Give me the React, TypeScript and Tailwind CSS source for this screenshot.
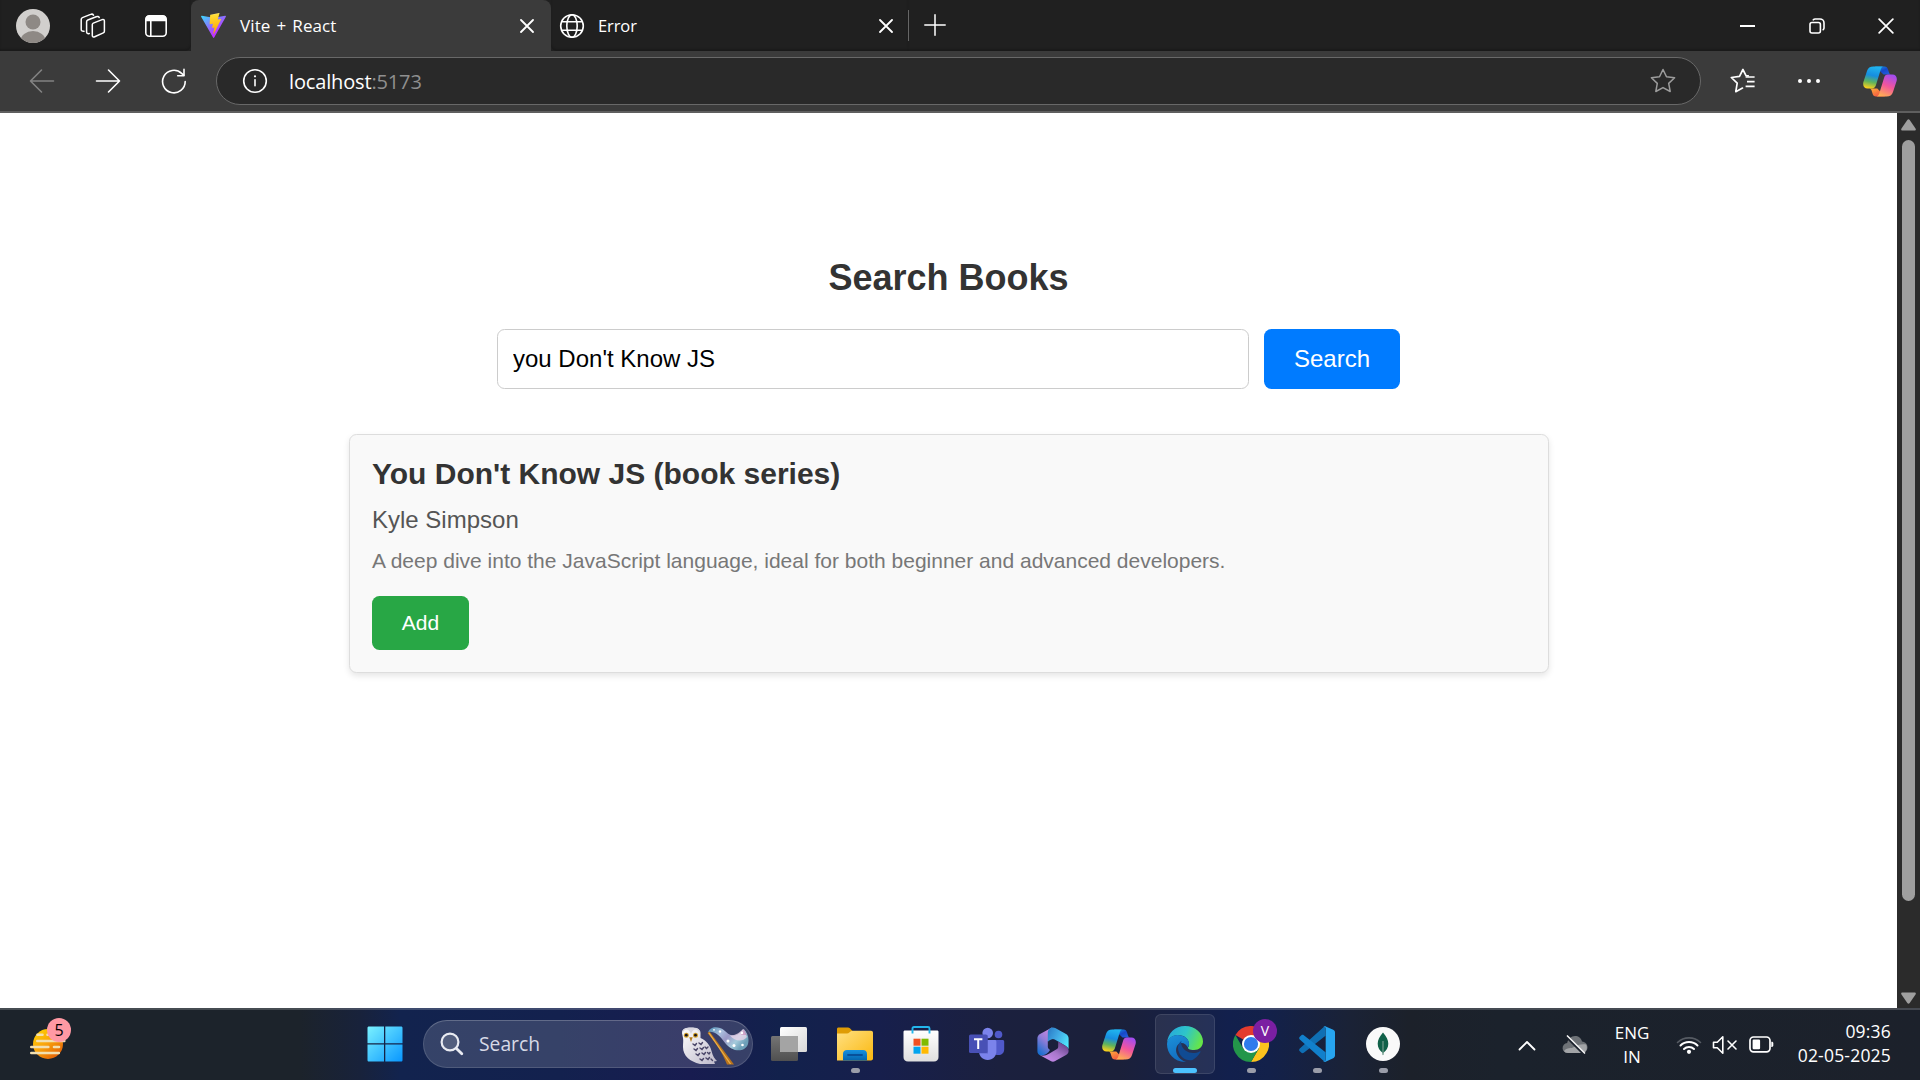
import React, { useState } from "react";

type IconProps = { className?: string };

const uiFont = "font-['Open_Sans','Noto_Sans',sans-serif]";

/* ---------- Browser chrome icons ---------- */

const Avatar = () => (
  <svg width="34" height="34" viewBox="0 0 34 34">
    <defs>
      <clipPath id="avatarClip"><circle cx="17" cy="17" r="17" /></clipPath>
    </defs>
    <circle cx="17" cy="17" r="17" fill="#d1cfcd" />
    <g clipPath="url(#avatarClip)" fill="#8e8985">
      <circle cx="17" cy="13" r="7.5" />
      <ellipse cx="17" cy="32" rx="12.5" ry="10" />
    </g>
  </svg>
);

const Workspaces = () => (
  <svg width="26" height="26" viewBox="0 0 26 26" fill="none" stroke="#fff" strokeWidth="1.5" strokeLinejoin="round" strokeLinecap="round">
    <path d="M12.3 11.6c0-.7.4-1.2 1-1.5l8.800-3.500c1.300-.5 2.300.1 2.300 1.400v10.200c0 .8-.4 1.400-1.100 1.700l-8.600 3.900c-1.300.6-2.400 0-2.400-1.300z" />
    <path d="M9.300 20.500c-1.600.5-2.700-.1-2.700-1.500V8.800c0-.8.4-1.500 1.200-1.800l8.400-3.300c1.300-.5 2.600-.2 3 .9" />
    <path d="M4 18.200c-1.700.3-2.800-.4-2.800-1.700V6.400c0-.8.5-1.500 1.200-1.800l8.200-3.200c1.200-.5 2.300-.2 2.900.7" />
  </svg>
);

const TabActions = () => (
  <svg width="24" height="24" viewBox="0 0 24 24" fill="none">
    <rect x="1.800" y="1.800" width="20.400" height="20.400" rx="3.500" stroke="#fff" strokeWidth="1.600" />
    <path d="M1.500 7.300V5A3.500 3.500 0 0 1 5 1.500h14A3.500 3.500 0 0 1 22.500 5v2.300z" fill="#fff" />
    <path d="M6.800 7v15" stroke="#fff" strokeWidth="1.600" />
  </svg>
);

const ViteLogo = () => (
  <svg width="25" height="25" viewBox="0 0 256 257">
    <defs>
      <linearGradient id="viteA" x1="-.8%" x2="57.600%" y1="7.600%" y2="78.400%">
        <stop offset="0%" stopColor="#41D1FF" /><stop offset="100%" stopColor="#BD34FE" />
      </linearGradient>
      <linearGradient id="viteB" x1="43.400%" x2="50.300%" y1="2.200%" y2="89%">
        <stop offset="0%" stopColor="#FFEA83" /><stop offset="8.300%" stopColor="#FFDD35" /><stop offset="100%" stopColor="#FFA800" />
      </linearGradient>
    </defs>
    <path fill="url(#viteA)" d="M255.153 37.938L134.897 252.976c-2.483 4.440-8.862 4.466-11.382.048L.875 37.958c-2.746-4.814 1.371-10.646 6.827-9.670l120.385 21.517a6.537 6.537 0 0 0 2.322-.004l117.867-21.483c5.438-.991 9.574 4.796 6.877 9.620Z" />
    <path fill="url(#viteB)" d="M185.432.063L96.440 17.501a3.268 3.268 0 0 0-2.634 3.014l-5.474 92.456a3.268 3.268 0 0 0 3.997 3.378l24.777-5.718c2.318-.535 4.413 1.507 3.936 3.838l-7.361 36.047c-.495 2.426 1.782 4.500 4.151 3.780l15.304-4.649c2.372-.720 4.652 1.360 4.150 3.788l-11.698 56.621c-.732 3.542 3.979 5.473 5.943 2.437l1.313-2.028l72.516-144.720c1.215-2.423-.880-5.186-3.540-4.672l-25.505 4.922c-2.396.462-4.435-1.770-3.759-4.114l16.646-57.705c.677-2.350-1.370-4.583-3.769-4.113Z" />
  </svg>
);

const Cross = ({ size, width = 1.8 }: { size: number; width?: number }) => (
  <svg width={size} height={size} viewBox="0 0 14 14" stroke="#fff" strokeWidth={width} strokeLinecap="round">
    <path d="M1 1l12 12M13 1L1 13" />
  </svg>
);

const Globe = () => (
  <svg width="26" height="26" viewBox="0 0 26 26" fill="none" stroke="#fff" strokeWidth="1.600">
    <circle cx="13" cy="13" r="11.300" />
    <ellipse cx="13" cy="13" rx="5.200" ry="11.300" />
    <path d="M2.600 8.800h20.800M2.600 17.300h20.800" />
  </svg>
);

const Plus = () => (
  <svg width="22" height="22" viewBox="0 0 22 22" stroke="#fff" strokeWidth="1.500" strokeLinecap="round">
    <path d="M11 .8v20.400M.8 11h20.400" />
  </svg>
);

const Restore = () => (
  <svg width="16" height="16" viewBox="0 0 16 16" fill="none" stroke="#fff" strokeWidth="1.600" strokeLinecap="round">
    <rect x="1" y="4.500" width="10.400" height="10.500" rx="2" />
    <path d="M4.300 1.800C4.800 1.200 5.400 1 6.200 1h4.800a4 4 0 0 1 4 4v5c0 .7-.3 1.300-.8 1.700" />
  </svg>
);

const Arrow = ({ className }: IconProps) => (
  <svg className={className} width="26" height="26" viewBox="0 0 26 26" fill="none" stroke="currentColor" strokeWidth="1.600" strokeLinecap="round" strokeLinejoin="round">
    <path d="M1.500 13h23M13.500 2l11 11-11 11" />
  </svg>
);

const Reload = () => (
  <svg width="26" height="26" viewBox="0 0 26 26" fill="none" stroke="#fff" strokeWidth="1.600" strokeLinecap="round" strokeLinejoin="round">
    <path d="M24.200 13.500A11.300 11.300 0 1 1 20.600 5.300L22.700 7.200" />
    <path d="M23 1.400v6.300h-6.300" />
  </svg>
);

const Info = () => (
  <svg width="26" height="26" viewBox="0 0 26 26" fill="none" stroke="#fff" strokeWidth="1.600" strokeLinecap="round">
    <circle cx="13" cy="13" r="11.300" />
    <path d="M13 11.800v6" />
    <circle cx="13" cy="8.300" r="1.100" fill="#fff" stroke="none" />
  </svg>
);

const Star = () => (
  <svg width="26" height="26" viewBox="0 0 26 26" fill="none" stroke="#9c9c9c" strokeWidth="1.500" strokeLinejoin="round">
    <path d="M13 1.500l3.500 7.300 8.100 1-5.900 5.600 1.500 8.100-7.200-3.900-7.200 3.900 1.500-8.100L1.400 9.800l8.100-1z" />
  </svg>
);

const Favorites = () => (
  <svg width="26" height="26" viewBox="0 0 26 26" fill="none" stroke="#fff" strokeWidth="1.700" strokeLinejoin="round" strokeLinecap="round">
    <path d="M18.200 7.900l-2.200-.3L12.900 1.500 9.500 8.400l-8.200 1.100 5.900 5.600-1.400 8.600 6.700-3.600" />
    <path d="M15.600 9h9M17 13.600h7.600M15.600 18.300h9" strokeLinecap="butt" />
  </svg>
);

const Copilot = ({ id }: { id: string }) => (
  <svg width="34" height="31" viewBox="0 0 34 31">
    <defs>
      <linearGradient id={id + "a"} x1="0.5" x2="0.3" y1="0" y2="1">
        <stop offset="0" stopColor="#20b4ee" /><stop offset=".4" stopColor="#168de0" /><stop offset=".7" stopColor="#60b35b" /><stop offset="1" stopColor="#ffd11a" />
      </linearGradient>
      <linearGradient id={id + "b"} x1="0.7" x2="0.3" y1="0" y2="1">
        <stop offset="0" stopColor="#a34cf0" /><stop offset=".5" stopColor="#f2559c" /><stop offset="1" stopColor="#ffae52" />
      </linearGradient>
      <linearGradient id={id + "c"} x1="0" x2="1" y1="0" y2="1">
        <stop offset="0" stopColor="#18a2ec" /><stop offset=".5" stopColor="#1748c8" /><stop offset="1" stopColor="#2765e4" />
      </linearGradient>
      <linearGradient id={id + "d"} x1="0" x2="1" y1="0" y2="1">
        <stop offset="0" stopColor="#ffb238" /><stop offset="1" stopColor="#ee3d45" />
      </linearGradient>
    </defs>
    <path d="M12 .5h9.500c2 0 3 1.300 3.500 3l1 3c.4 1.400 1.300 2 2.700 2h-8.200z" fill={`url(#${id}c)`} />
    <path d="M22 30.500h-9c-2 0-3-1.300-3.500-3l-1-3.200c-.4-1.300-1.300-1.800-2.700-1.800h8.500z" fill={`url(#${id}d)`} />
    <path d="M10.500.5h10c-1.700 0-2.400 1.700-2.900 3.400l-4.700 15.400c-.6 2-1.800 3.200-3.800 3.200H4.600C1.300 22.500-.5 19.900.4 16L4 5C5 1.800 7 .5 10.500.5z" fill={`url(#${id}a)`} />
    <path d="M23.500 30.500h-10c1.700 0 2.400-1.700 2.900-3.400l4.700-15.400c.6-2 1.800-3.200 3.800-3.200h4.500c3.300 0 5.100 2.600 4.200 6.500L30 26c-1 3.200-3 4.500-6.500 4.500z" fill={`url(#${id}b)`} />
  </svg>
);

/* ---------- Taskbar icons ---------- */

const Weather = () => (
  <svg width="38" height="32" viewBox="0 0 38 32">
    <defs>
      <linearGradient id="sun" x1="0" x2=".8" y1="0" y2="1">
        <stop offset="0" stopColor="#ffd800" /><stop offset=".5" stopColor="#f9a50c" /><stop offset="1" stopColor="#e25b05" />
      </linearGradient>
    </defs>
    <circle cx="19" cy="16" r="15" fill="url(#sun)" />
    <g stroke="#f2dfaf" strokeWidth="2.600" strokeLinecap="round">
      <path d="M8.500 6.800h5M8.300 13h27M2.300 19h17M25 19h5M2.300 25h27.500M18.500 6.800h3" />
    </g>
  </svg>
);

const WindowsLogo = () => (
  <svg width="36" height="36" viewBox="0 0 36 36">
    <defs>
      <linearGradient id="win" x1="0" y1="0" x2="36" y2="36" gradientUnits="userSpaceOnUse">
        <stop offset="0" stopColor="#7cf3ff" /><stop offset="1" stopColor="#0795ff" />
      </linearGradient>
    </defs>
    <g fill="url(#win)">
      <path d="M2 .5h15v16.700H.5V2C.5 1 1 .5 2 .5zM18.300.5H34c1 0 1.500.5 1.500 1.500v15.200H18.300zM.5 18.600H17v16.900H2c-1 0-1.500-.5-1.500-1.500zM18.300 18.600h17.200V34c0 1-.5 1.500-1.500 1.500H18.300z" />
    </g>
  </svg>
);

const Magnifier = () => (
  <svg width="24" height="24" viewBox="0 0 24 24" fill="none" stroke="#e9ebf2" strokeWidth="2.200" strokeLinecap="round">
    <circle cx="10" cy="10" r="8.400" fill="#ffffff26" />
    <path d="M16.200 16.200l5.600 5.600" strokeWidth="2.800" />
  </svg>
);

const OwlArt = () => (
  <svg width="68" height="38" viewBox="0 0 68 38">
    <defs>
      <linearGradient id="hat" x1="0" x2="1" y1="0" y2=".5">
        <stop offset="0" stopColor="#4a8db0" /><stop offset=".35" stopColor="#a9bedd" /><stop offset=".55" stopColor="#9a98c6" /><stop offset=".8" stopColor="#a5cbdc" /><stop offset="1" stopColor="#6d9fb8" />
      </linearGradient>
      <linearGradient id="owl" x1="0" x2="1" y1="0" y2="1">
        <stop offset="0" stopColor="#fff" /><stop offset="1" stopColor="#bdb9ca" />
      </linearGradient>
    </defs>
    <path d="M1 6C1 2 5 .8 10 .8S19.500 2 19.500 6v5c6 2.500 9.500 7 11 13 1.300 5 3.200 8 5.500 10l-3 .5 1 2.500H19C9 34.500 2 29 2 20c0-4 .5-6 0-9z" fill="url(#owl)" />
    <path d="M2 5c2-3.500 6-3.500 8 2 2-5.500 6-5.500 8-2l1 1C19 1.500 16 .5 10 .5S1 2 1 6z" fill="#d8d6e0" />
    <circle cx="5.300" cy="8.200" r="2.500" fill="#d6a32c" /><circle cx="14.500" cy="8.200" r="2.500" fill="#d6a32c" />
    <circle cx="5.300" cy="8.200" r="1.400" fill="#1a1720" /><circle cx="14.500" cy="8.200" r="1.400" fill="#1a1720" />
    <path d="M8.300 10.200h3.400L10 15z" fill="#b07a1c" />
    <g stroke="#4a4668" strokeWidth="1.400" strokeLinecap="round" fill="none">
      <path d="M12 17l2 1.500 1.500-2M18 16l2 1.500 1.500-2M13 22l2 1.500 1.500-2M19 21l2 1.500 1.500-2M24 20l1.500 1.500 1.500-1.500M15 27l2 1.500 1.500-2M21 26l2 1.500 1.500-2M26.500 25.500l1.500 1.500 1-1.500M19 32l2 1.500 1.500-2M25 31l2 1.500 1.500-2M30 32l1.500 1.500" />
    </g>
    <path d="M27 5.500C29 0 34-.5 39 1c6 2 8 8 14 7.500 5-.5 7-4 9.500-6.500 4 3.500 6 9 4.500 15-2 6.500-10 8-16.500 4.500C44 18 41 10 35 6.500 32 4.800 29 4 27 5.500z" fill="url(#hat)" />
    <path d="M49 8.500c6 0 10-3.500 13-6.500l4 8c-4 5-12 5-17-1.500z" fill="#ecd5ea" opacity=".75" />
    <path d="M60 8l3-6 3 6z" fill="#c77bb0" opacity=".55" />
    <path d="M26.500 6l2-1.500L53 37.500h-7C41 24.500 33.500 14.500 26.500 6z" fill="#b9731c" />
    <path d="M28 6l21.500 31" stroke="#eab04a" strokeWidth="1.300" />
    <g fill="#fff"><circle cx="39" cy="4.500" r="1.200" /><circle cx="47" cy="14" r="1.500" /><circle cx="61" cy="6" r="1.200" /><circle cx="53" cy="18.500" r="1.500" /><circle cx="61.500" cy="18" r="1.300" /><circle cx="33" cy="2.800" r=".9" /></g>
  </svg>
);

const TaskView = () => (
  <svg width="36" height="34" viewBox="0 0 36 34">
    <defs>
      <linearGradient id="tv1" x1="0" x2="0" y1="0" y2="1"><stop offset="0" stopColor="#747474" /><stop offset="1" stopColor="#505050" /></linearGradient>
      <linearGradient id="tv2" x1="0" x2="1" y1="0" y2="1"><stop offset="0" stopColor="#fff" /><stop offset="1" stopColor="#d8d8d8" /></linearGradient>
    </defs>
    <rect x="0" y="9" width="27" height="25" rx="1.500" fill="url(#tv1)" />
    <rect x="9" y="0" width="27" height="25" rx="1.500" fill="url(#tv2)" />
    <path d="M9 9h18v16H10.500C9.500 25 9 24.500 9 23.500z" fill="#a4a4a4" />
  </svg>
);

const Explorer = () => (
  <svg width="36" height="34" viewBox="0 0 36 34">
    <defs>
      <linearGradient id="fe1" x1="0" x2="1" y1="0" y2="1"><stop offset="0" stopColor="#ffe082" /><stop offset="1" stopColor="#fbb80f" /></linearGradient>
      <linearGradient id="fe2" x1="0" x2="0" y1="0" y2="1"><stop offset="0" stopColor="#1590e0" /><stop offset="1" stopColor="#0564ad" /></linearGradient>
    </defs>
    <path d="M0 2C0 1 .7.500 1.500.500H11c.8 0 1.300.2 1.900.8L16 4.500v5H0z" fill="#df9c05" />
    <path d="M0 6.500h10c1 0 1.700-.3 2.300-.9l1.200-1c.6-.5 1.200-.8 2-.8H34c1.200 0 2 .8 2 2V31.500c0 1.200-.8 2-2 2H0z" fill="url(#fe1)" />
    <path d="M6 33.500V27c0-2.500 1.500-4 4-4h16c2.500 0 4 1.500 4 4v6.500z" fill="url(#fe2)" />
    <path d="M11 28h14" stroke="#07509a" strokeWidth="1.800" strokeLinecap="round" />
  </svg>
);

const Store = () => (
  <svg width="36" height="36" viewBox="0 0 36 36">
    <defs><linearGradient id="st" x1="0" x2="0" y1="0" y2="1"><stop offset="0" stopColor="#fff" /><stop offset="1" stopColor="#dedede" /></linearGradient></defs>
    <path d="M.5 6c0-1 .5-1.500 1.500-1.500h32c1 0 1.500.5 1.500 1.500v25c0 2.800-1.700 4.500-4.500 4.500H5C2.200 35.500.5 33.800.5 31z" fill="url(#st)" />
    <path d="M9.500 7.500V2.500c0-1 .5-1.500 1.500-1.500h14c1 0 1.500.5 1.500 1.500v5" fill="none" stroke="#23b6ec" strokeWidth="1.900" />
    <path d="M10.500 12.700h7v7h-7z" fill="#f15022" /><path d="M18.500 12.700h7v7h-7z" fill="#80bb01" />
    <path d="M10.500 20.700h7v7h-7z" fill="#02a4ef" /><path d="M18.500 20.700h7v7h-7z" fill="#ffb902" />
  </svg>
);

const Teams = () => (
  <svg width="36" height="34" viewBox="0 0 36 34">
    <circle cx="29.500" cy="7.500" r="3.800" fill="#5059c9" />
    <path d="M24 13h9.500c1 0 1.700.7 1.700 1.700V22c0 4-2.500 6-6 6s-5.200-2-5.200-6z" fill="#5059c9" />
    <circle cx="18.700" cy="6" r="5.300" fill="#7b83eb" />
    <path d="M10.500 13h15.200c1 0 1.700.7 1.700 1.700V24c0 5.500-3.700 9-8.700 9S10 29.500 10 24z" fill="#7b83eb" />
    <path d="M10 8.500h9v18h-8.600c-.3-1-.4-2-.4-3z" fill="#4a50ad" opacity=".5" />
    <rect x="0" y="7.500" width="18.500" height="18.500" rx="1.600" fill="#4850b5" />
    <path d="M5 12.300h8.400M9.200 12.300v9.700" stroke="#fff" strokeWidth="2" />
  </svg>
);

const Office = () => (
  <svg width="32" height="35" viewBox="0 0 32 35">
    <defs>
      <linearGradient id="of1" x1=".8" x2=".3" y1="0" y2="1"><stop offset="0" stopColor="#d68be0" /><stop offset=".5" stopColor="#8f7cd8" /><stop offset="1" stopColor="#1b6fd0" /></linearGradient>
      <linearGradient id="of2" x1="0" x2="1" y1=".2" y2=".7"><stop offset="0" stopColor="#2b7fc9" /><stop offset=".5" stopColor="#43aee6" /><stop offset="1" stopColor="#4fe6fb" /></linearGradient>
      <linearGradient id="of3" x1=".2" x2=".9" y1="1" y2=".2"><stop offset="0" stopColor="#c98bec" /><stop offset=".5" stopColor="#a978cc" /><stop offset="1" stopColor="#6b4690" /></linearGradient>
    </defs>
    <path d="M15 .5L3 7C1.300 8 .4 9.500.4 11.500V24c0 2 .9 3.400 2.600 4.300 3.500 1 8-1.800 10-5.300l-1.200-1c-.7-.6-1-1.300-1-2.200V15c0-1 .3-1.700 1.200-2.200l4-2.500z" fill="url(#of1)" />
    <path d="M10.800 15V5.500C10.800 2.500 13.500.2 16 .4c.8 0 1.500.2 2.200.6L29 7c1.700 1 2.600 2.500 2.600 4.500V22c-.7-1.500-1.800-2.500-3.200-3.300L21.200 14.500l-3.500-2.100c-1.200-.7-2.300-.7-3.500 0l-2.400 1.400z" fill="url(#of2)" />
    <path d="M3 28.300c3 1 6.300 0 9-1.600l7.500-4.500c1.200-.7 1.700-1.500 1.700-2.800v-4.900l7.200 4.200c2 1.200 3.200 2.800 3.200 5 0 2-.9 3.400-2.600 4.400l-10.800 6c-1.500.8-3 .8-4.500 0z" fill="url(#of3)" />
  </svg>
);

const Edge = () => (
  <svg width="36" height="36" viewBox="0 0 36 36">
    <defs>
      <linearGradient id="ed1" x1="0" x2="1" y1=".2" y2=".5"><stop offset="0" stopColor="#26a6dd" /><stop offset=".5" stopColor="#2ec5c9" /><stop offset="1" stopColor="#66e648" /></linearGradient>
      <linearGradient id="ed2" x1=".3" x2=".7" y1="0" y2="1"><stop offset="0" stopColor="#1b8ed8" /><stop offset="1" stopColor="#1169bc" /></linearGradient>
    </defs>
    <path d="M0 17C.8 7 8 0 18 0c10.500 0 18 7.500 18 15.500 0 5-4 8.500-9 8.500-4.500 0-6.500-1.500-6-2.500.8-1 1.300-2 1-4C21.500 12.500 17 9 11 9 5 9 1 13 0 17z" fill="url(#ed1)" />
    <path d="M0 18c.5-5.500 5-9 10.500-9C17 9 22 13 22 17.500c0 2-.5 3-1.200 4-2-5-8.300-6.500-10.800-1.500-3 6 1.500 14 9 15.900C8 36.500 0 28 0 18z" fill="url(#ed2)" />
    <path d="M14.500 14.700C9.500 18 10 26 15 31c3 2.700 7 4 10.500 3 3-1.500 6-4.500 8-8 .3-.8-.5-1-1-.6-4 2.300-10 2.300-14-.9-3.500-2.700-5-6.500-4-9.800z" fill="#104b93" />
  </svg>
);

const Chrome = () => (
  <svg width="36" height="36" viewBox="0 0 36 36">
    <path d="M18 18L2.400 9A18 18 0 0 1 33.600 9z" fill="#e33b2e" />
    <path d="M18 9h15.600A18 18 0 0 1 18 36l7.800-13.500z" fill="#fcc31e" />
    <path d="M10.200 22.500L2.400 9A18 18 0 0 0 18 36l7.800-13.500z" fill="#23964a" />
    <circle cx="18" cy="18" r="9" fill="#fff" /><circle cx="18" cy="18" r="7.100" fill="#2f7bed" />
  </svg>
);

const VSCode = () => (
  <svg width="36" height="36" viewBox="0 0 36 36">
    <path d="M26.500.2V9.700L4.800 26.800c-.8.600-1.700.6-2.400 0L.8 25.300c-.9-.8-.9-2 0-2.800L25 .7c.5-.4 1-.5 1.500-.5z" fill="#0f6fb4" />
    <path d="M26.500 35.800v-9.500L4.800 9.200c-.8-.6-1.700-.6-2.400 0L.8 10.700c-.9.8-.9 2 0 2.800L25 35.300c.5.400 1 .5 1.500.5z" fill="#1180cc" />
    <path d="M26.500 35.800c-1 .2-1.800-.1-2.500-.8.900.8 2.700.2 2.700-1.300V2.300c0-1.500-1.800-2.100-2.700-1.200.7-.8 1.700-1.100 2.700-.7l7.500 3.400c1.100.5 1.800 1.400 1.800 2.600v23.200c0 1.200-.7 2.100-1.800 2.600z" fill="#27a5f0" />
  </svg>
);

const Mongo = () => (
  <svg width="34" height="34" viewBox="0 0 34 34">
    <circle cx="17" cy="17" r="17" fill="#f9f9f9" />
    <path d="M17 5.500c3.500 4 5.300 7.500 5.300 11.300 0 4.200-2 6.700-4.900 8.900L17 28.500l-.4-2.800c-2.900-2.200-4.900-4.700-4.900-8.900C11.700 13 13.500 9.500 17 5.500z" fill="#116149" />
    <path d="M17 14v14" stroke="#7fa394" strokeWidth="1.100" />
  </svg>
);

const CloudOff = () => (
  <svg width="26" height="22" viewBox="0 0 26 22">
    <path d="M6 19a5 5 0 0 1-.8-10C6 5 9 2 13 2c3.500 0 6.200 2 7 5.500 3.500.3 5.500 3 5.500 5.800 0 3.200-2.400 5.700-5.500 5.700z" fill="#6e7277" />
    <path d="M2 17c3-4 7-2 10-4s8-3.500 12-2.500c2 3.500.5 8.500-4 8.500H6c-2 0-3.500-.8-4-2z" fill="#a2a4a7" />
    <path d="M4.500 2.500l17 17" stroke="#1c222d" strokeWidth="3" />
    <path d="M5 1.500l18 18" stroke="#fff" strokeWidth="1.500" />
  </svg>
);

const Wifi = () => (
  <svg width="26" height="20" viewBox="0 0 26 20" fill="none" strokeWidth="2" strokeLinecap="round">
    <path d="M1.500 7.500a16.500 16.500 0 0 1 23 0" stroke="#565b63" strokeWidth="1.600" />
    <path d="M4.500 10.500a12.200 12.200 0 0 1 17 0M8 14a7 7 0 0 1 10 0" stroke="#fff" />
    <circle cx="13" cy="16.800" r="2.100" fill="#fff" />
  </svg>
);

const SpeakerMute = () => (
  <svg width="26" height="20" viewBox="0 0 26 20" fill="none" stroke="#fff" strokeWidth="1.600" strokeLinecap="round" strokeLinejoin="round">
    <path d="M1.500 7.200h3.800l5.500-5.400v16.400l-5.500-5.400H1.500z" />
    <path d="M16 6l8 8M24 6l-8 8" />
  </svg>
);

const Battery = () => (
  <svg width="25" height="17" viewBox="0 0 25 17" fill="none">
    <rect x="1" y="1" width="20" height="14.800" rx="3.500" stroke="#fff" strokeWidth="1.700" />
    <rect x="3.600" y="3.600" width="7.500" height="9.600" rx="1.200" fill="#fff" />
    <path d="M22.300 5.800h.6c.8 0 1.400.6 1.400 1.400v2.400c0 .8-.6 1.400-1.400 1.400h-.6z" fill="#fff" />
  </svg>
);

/* ---------- Sections ---------- */

const TabBar = () => (
  <header className={`flex h-[51px] bg-[#202020] text-white ${uiFont}`}>
    <div className="flex h-full w-[191px] items-center rounded-br-md shadow-[inset_0_-2px_2px_#00000033]">
      <div className="flex w-[66px] justify-center"><Avatar /></div>
      <div className="flex w-[54px] justify-center"><Workspaces /></div>
      <div className="flex flex-1 justify-center"><TabActions /></div>
    </div>
    <div className="flex h-full w-[360px] items-center rounded-t-lg bg-[#3b3b3b] pr-[17px] pl-[10px]">
      <ViteLogo />
      <span className="ml-[14px] flex-1 pt-px text-[17px] tracking-[0.1px] [word-spacing:1.500px]">Vite + React</span>
      <Cross size={14} />
    </div>
    <div className="flex h-full w-[357px] items-center rounded-bl-md pr-[15px] pl-[8px] shadow-[inset_0_-2px_2px_#00000033]">
      <Globe />
      <span className="ml-[13px] flex-1 pt-px text-[16.500px] tracking-[-0.1px]">Error</span>
      <Cross size={14} />
    </div>
    <div className="flex flex-1 items-center shadow-[inset_0_-2px_2px_#00000033]">
      <div className="h-[31px] w-px bg-[#666]" />
      <div className="mb-[2px] ml-[15px]"><Plus /></div>
      <div className="ml-auto flex items-center">
        <div className="flex w-[69px] justify-center"><div className="h-[2px] w-[15px] bg-white" /></div>
        <div className="flex w-[69px] justify-center"><Restore /></div>
        <div className="flex w-[69px] justify-center"><Cross size={16} width={1.5} /></div>
      </div>
    </div>
  </header>
);

const Toolbar = () => (
  <nav className={`flex h-[62px] items-center border-b-2 border-[#5f5f5f] bg-[#3b3b3b] ${uiFont}`}>
    <div className="ml-[9px] flex w-[66px] justify-center"><Arrow className="rotate-180 text-[#838383]" /></div>
    <div className="flex w-[66px] justify-center"><Arrow className="text-white" /></div>
    <div className="flex w-[66px] justify-center"><Reload /></div>
    <div className="ml-[9px] flex h-12 w-[1485px] items-center rounded-full border-[1.500px] border-[#686868] bg-[#292929] pr-[24px] pl-[25px]">
      <Info />
      <span className="ml-[21px] flex-1 pt-[2px] text-[20px] tracking-[-0.150px] text-white">localhost<span className="text-[#8f8f8f]">:5173</span></span>
      <Star />
    </div>
    <div className="ml-[9px] flex w-[66px] justify-center"><Favorites /></div>
    <div className="flex w-[66px] justify-center gap-[5px]">
      <i className="size-1 rounded-full bg-white" /><i className="size-1 rounded-full bg-white" /><i className="size-1 rounded-full bg-white" />
    </div>
    <div className="ml-[21px]"><Copilot id="cpTop" /></div>
  </nav>
);

const ScrollRail = () => (
  <aside className="flex w-[23px] flex-col items-center bg-[#2b2b2b] pt-[6px] pb-[4px]">
    <svg width="15" height="12" viewBox="0 0 15 12"><path d="M6.300 1c.7-1 1.700-1 2.400 0l5.800 8.500c.7 1.200.2 2-1 2h-12c-1.200 0-1.700-.8-1-2z" fill="#9f9f9f" /></svg>
    <div className="mt-[9px] h-[761px] w-[13px] rounded-full bg-[#9f9f9f]" />
    <svg className="mt-auto" width="15" height="12" viewBox="0 0 15 12"><path d="M6.300 11c.7 1 1.700 1 2.400 0l5.800-8.500c.7-1.200.2-2-1-2h-12c-1.200 0-1.700.8-1 2z" fill="#9f9f9f" /></svg>
  </aside>
);

const BookPage = () => {
  const [query, setQuery] = useState("you Don't Know JS");
  return (
    <main className="flex flex-1 flex-col items-center bg-white pt-[144px] font-['Liberation_Sans',Arial,sans-serif]">
      <h2 className="text-[36px] leading-[42px] font-bold text-[#333]">Search Books</h2>
      <div className="mt-[30px] flex h-[60px] gap-[15px]">
        <input
          value={query}
          onChange={(e) => setQuery(e.target.value)}
          className="w-[752px] rounded-[7.500px] border border-[#ccc] px-[15px] text-[24px] text-black outline-none"
        />
        <button className="w-[136px] rounded-[7.500px] bg-[#007bff] text-[24px] text-white">Search</button>
      </div>
      <article className="mt-[45px] flex h-[239px] w-[1200px] flex-col items-start rounded-[7.500px] border border-[#ddd] bg-[#f9f9f9] px-[22.500px] pt-[22px] shadow-[0_3px_6px_rgba(0,0,0,0.1)]">
        <h3 className="text-[30px] leading-[34px] font-bold text-[#333]">You Don't Know JS (book series)</h3>
        <p className="mt-[15px] text-[24px] leading-[27px] text-[#555]">Kyle Simpson</p>
        <p className="mt-[16px] text-[21px] leading-[24px] text-[#777]">A deep dive into the JavaScript language, ideal for both beginner and advanced developers.</p>
        <button className="mt-[23px] h-[54px] w-[97px] rounded-[7.500px] bg-[#28a745] text-[21px] text-white">Add</button>
      </article>
    </main>
  );
};

const Slot = ({ children, active, running }: { children: React.ReactNode; active?: boolean; running?: boolean }) => (
  <div className="relative flex h-full w-[66px] items-center justify-center">
    {active && <div className="absolute top-[4px] left-[3px] size-[60px] rounded-md border border-[#ffffff1a] bg-[#ffffff14]" />}
    <div className="relative -top-px">{children}</div>
    {active && <div className="absolute bottom-[7px] h-[5px] w-6 rounded-full bg-[#4cc2ff]" />}
    {running && <div className="absolute bottom-[7px] h-[5px] w-[9px] rounded-full bg-[#9a9da9]" />}
  </div>
);

const Taskbar = () => (
  <footer className={`flex h-[72px] border-t-2 border-[#ffffff30] bg-[linear-gradient(90deg,#1c232b_0px,#1c232b_300px,#18223b_360px,#12234e_400px,#13214e_560px,#181c50_690px,#12214c_780px,#171f4c_880px,#1b203e_1000px,#1b203a_1120px,#12204d_1230px,#13214a_1270px,#1a2236_1350px,#1c212a_1410px,#1b222c_1500px,#1c212b_1920px)] bg-origin-border text-white ${uiFont}`}>
    <div className="relative mt-[18px] ml-[29px] h-[34px] w-[45px]">
      <Weather />
      <span className="absolute -top-[10px] left-[18px] flex size-6 items-center justify-center rounded-full bg-[#ff99a4] text-[16px] leading-none text-black">5</span>
    </div>
    <div className="ml-[278px] flex h-full"><Slot><WindowsLogo /></Slot></div>
    <div className="mt-[10px] ml-[5px] flex h-12 w-[330px] items-center rounded-full border-[1.500px] border-[#ffffff22] border-t-[#ffffff38] bg-[#ffffff26] pr-[3px] pl-[16px]">
      <Magnifier />
      <span className="ml-[15px] flex-1 text-[19.300px] text-[#d7d9e6]">Search</span>
      <div className="mt-[3px]"><OwlArt /></div>
    </div>
    <div className="ml-[3px] flex h-full">
      <Slot><TaskView /></Slot>
      <Slot running><Explorer /></Slot>
      <Slot><Store /></Slot>
      <Slot><Teams /></Slot>
      <Slot><Office /></Slot>
      <Slot><Copilot id="cpTask" /></Slot>
      <Slot active><Edge /></Slot>
      <Slot running>
        <Chrome />
        <span className="absolute -top-[7px] left-[20px] flex size-6 items-center justify-center rounded-full bg-[#7b1fa2] text-[14px] leading-none text-white">V</span>
      </Slot>
      <Slot running><VSCode /></Slot>
      <Slot running><Mongo /></Slot>
    </div>
    <div className="ml-auto flex h-full items-center pr-[29px] text-[17px] leading-[24px]">
      <svg width="18" height="11" viewBox="0 0 18 11" fill="none" stroke="#fff" strokeWidth="1.800" strokeLinecap="round" strokeLinejoin="round"><path d="M1.500 9.500L9 2l7.500 7.500" /></svg>
      <div className="ml-[26px]"><CloudOff /></div>
      <div className="ml-[26px] w-[36px] pb-px text-center">ENG<br />IN</div>
      <div className="ml-[26px]"><Wifi /></div>
      <div className="ml-[10px] pb-px"><SpeakerMute /></div>
      <div className="ml-[11px] pb-px"><Battery /></div>
      <div className="ml-[22px] w-[95px] pb-[4px] text-right text-[17.500px] tracking-[0.200px] whitespace-nowrap">09:36<br />02-05-2025</div>
    </div>
  </footer>
);

export default function App() {
  return (
    <div className="flex h-[1080px] w-[1920px] flex-col overflow-hidden">
      <TabBar />
      <Toolbar />
      <div className="flex flex-1">
        <BookPage />
        <ScrollRail />
      </div>
      <Taskbar />
    </div>
  );
}
